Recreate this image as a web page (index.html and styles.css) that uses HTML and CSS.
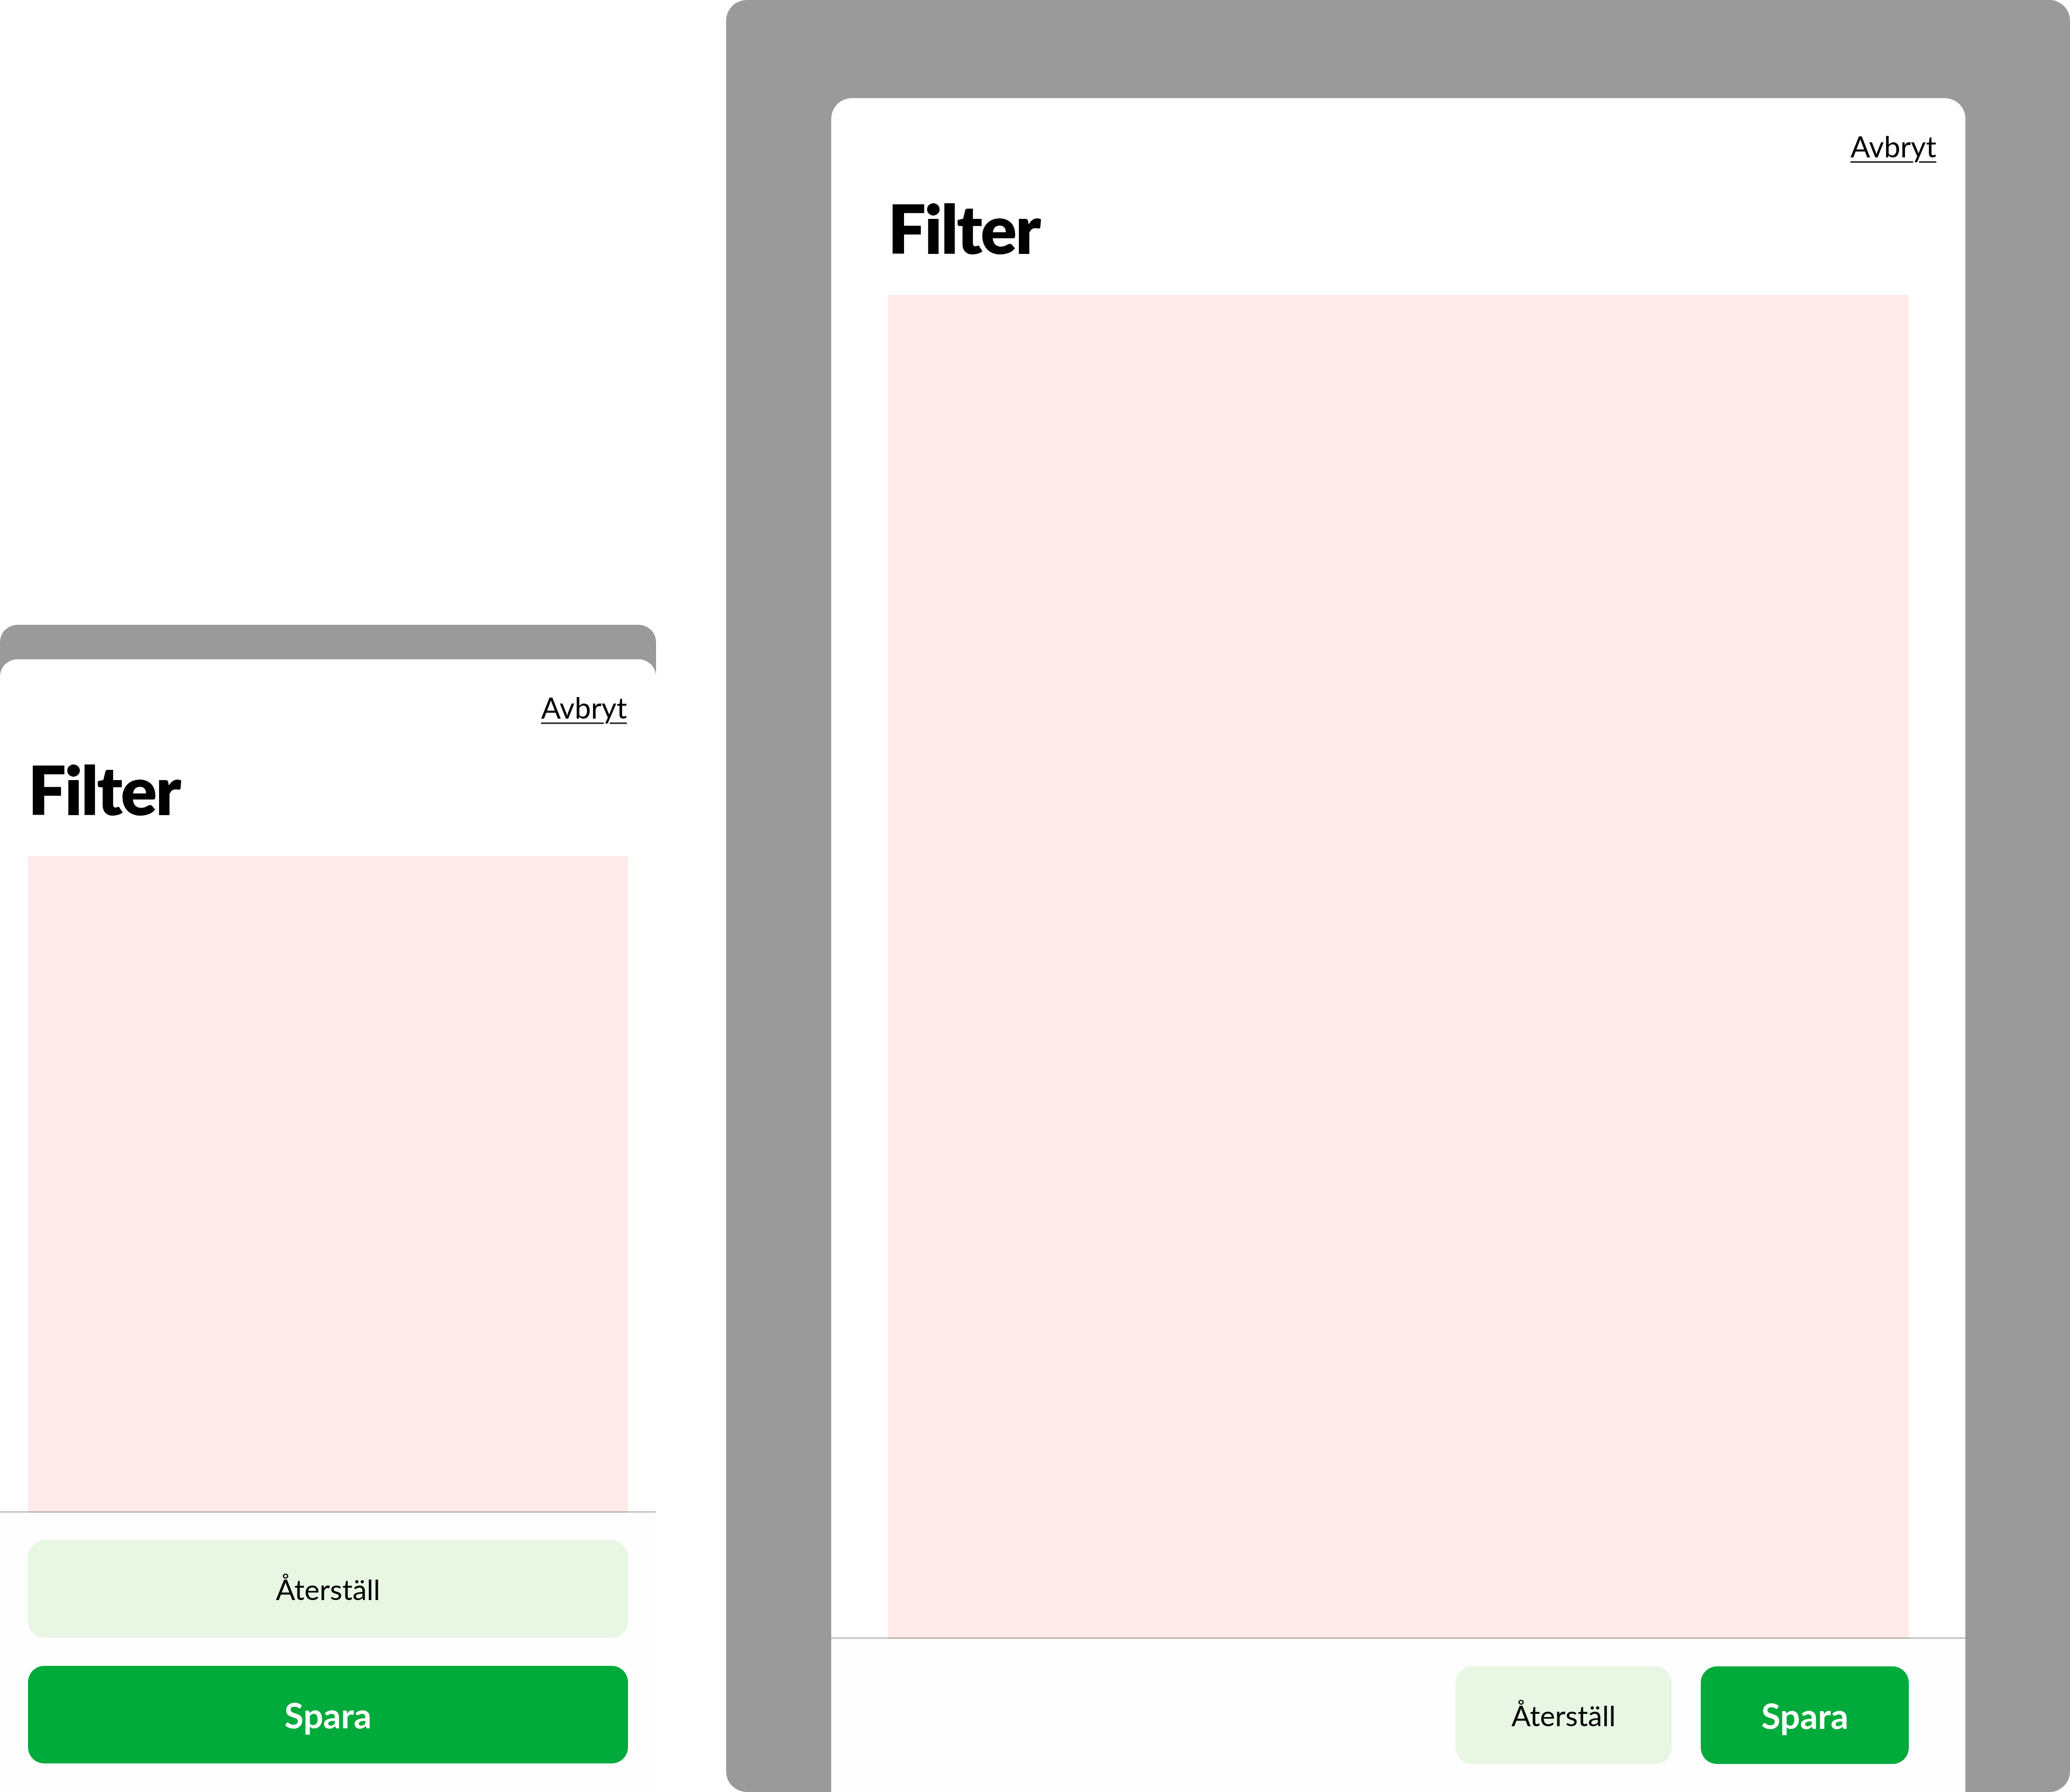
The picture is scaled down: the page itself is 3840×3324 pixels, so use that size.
FILE: index.html
```html
<!DOCTYPE html>
<html lang="sv">
<head>
<meta charset="utf-8">
<title>Filter</title>
<link rel="stylesheet" href="styles.css">
</head>
<body>
<div class="stage">
  <div class="device phone">
    <div class="sheet">
      <div class="sheet-head">
        <div class="cancel-row"><a class="cancel" href="#">Avbryt</a></div>
        <h1 class="title">Filter</h1>
      </div>
      <div class="sheet-body"><div class="placeholder"></div></div>
      <div class="sheet-foot">
        <button class="btn btn-secondary">Återställ</button>
        <button class="btn btn-primary">Spara</button>
      </div>
    </div>
  </div>
  <div class="device tablet">
    <div class="sheet">
      <div class="sheet-head">
        <div class="cancel-row"><a class="cancel" href="#">Avbryt</a></div>
        <h1 class="title">Filter</h1>
      </div>
      <div class="sheet-body"><div class="placeholder"></div></div>
      <div class="sheet-foot">
        <button class="btn btn-secondary">Återställ</button>
        <button class="btn btn-primary">Spara</button>
      </div>
    </div>
  </div>
</div>
</body>
</html>
```
FILE: styles.css
```css
html, body {
  margin: 0;
  padding: 0;
  background: #ffffff;
}
body {
  font-family: Lato, "Liberation Sans", sans-serif;
  color: #000;
}
.stage {
  width: 3840px;
  height: 3324px;
  display: flex;
  align-items: flex-end;
  gap: 130px;
}
.device {
  background: #9a9a9a;
  box-sizing: border-box;
  display: flex;
  flex-direction: column;
}
.phone {
  width: 1217px;
  height: 2165px;
  padding-top: 64px;
  border-radius: 32px 32px 0 0;
}
.tablet {
  width: 2493px;
  height: 3324px;
  padding: 182px 194px 0 195px;
  border-radius: 38px 38px 38px 38px;
}
.sheet {
  flex: 1;
  background: #ffffff;
  border-radius: 32px 32px 0 0;
  display: flex;
  flex-direction: column;
  overflow: hidden;
}
.tablet .sheet {
  border-radius: 38px 38px 0 0;
}
.sheet-head {
  padding: 58px 54px 0 52px;
}
.tablet .sheet-head {
  padding: 58px 54px 0 105px;
}
.cancel-row {
  text-align: right;
  height: 64px;
}
.cancel {
  font-size: 54px;
  line-height: 64px;
  color: #000;
  text-decoration: underline;
  text-decoration-thickness: 3px;
  text-underline-offset: 7px;
  text-decoration-color: #333;
}
.title {
  margin: 57px 0 0;
  font-size: 125px;
  line-height: 125px;
  font-weight: 800;
  letter-spacing: -3px;
}
.sheet-body {
  flex: 1;
  padding: 61px 52px 0;
  display: flex;
}
.tablet .sheet-body {
  padding: 61px 105px 0;
}
.placeholder {
  flex: 1;
  background: #ffebeb;
}
.sheet-foot {
  background: #fefefe;
  box-shadow: 0 -3px 0 rgba(0, 0, 0, 0.22);
  padding: 51px 52px 53px;
  display: flex;
  flex-direction: column;
  gap: 52px;
}
.tablet .sheet-foot {
  flex-direction: row;
  justify-content: flex-end;
  gap: 54px;
  padding: 51px 105px 52px;
}
.btn {
  height: 181px;
  border: 0;
  border-radius: 30px;
  font-family: Lato, "Liberation Sans", sans-serif;
  cursor: pointer;
  padding: 0 104px;
}
.btn-secondary {
  background: #e8f6e4;
  color: #000;
  font-size: 53px;
  font-weight: 400;
}
.btn-primary {
  background: #00aa3b;
  color: #fff;
  font-size: 65px;
  font-weight: 700;
  letter-spacing: 0;
  padding: 0 112px;
}
```
